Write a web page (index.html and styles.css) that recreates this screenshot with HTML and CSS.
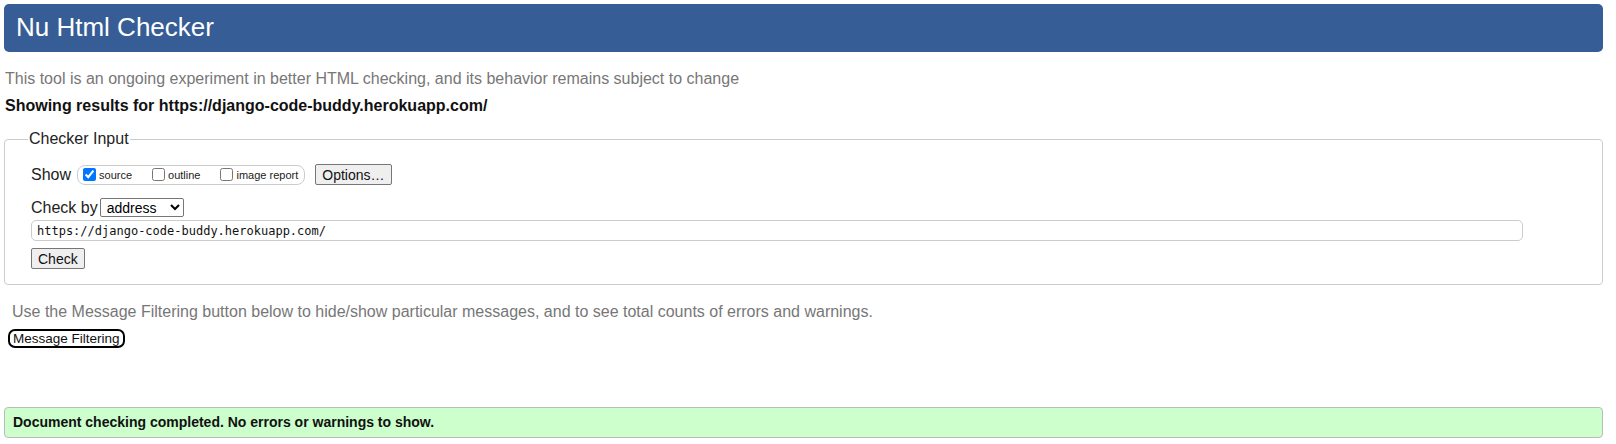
FILE: index.html
```html
<!DOCTYPE html>
<html lang="en">
<head>
    <meta charset="UTF-8" />
    <title>Nu Html Checker</title>
    <link rel="stylesheet" href="styles.css">
</head>
<body>
    <h1 class="title">Nu Html Checker</h1>
    <p class="intro">This tool is an ongoing experiment in better HTML checking, and its behavior remains subject to change</p>
    <p class="results-for">Showing results for https://django-code-buddy.herokuapp.com/</p>
    <form class="checker">
        <fieldset>
            <legend>Checker Input</legend>
            <div class="row show-row">
                <span class="row-label">Show</span>
                <span class="show-group">
                    <label><input type="checkbox" checked /> source</label>
                    <label><input type="checkbox" /> outline</label>
                    <label><input type="checkbox" /> image report</label>
                </span>
                <button type="button" class="btn options">Options…</button>
            </div>
            <div class="row">
                <span class="row-label">Check by</span>
                <select class="check-by">
                    <option>address</option>
                </select>
            </div>
            <input type="url" class="url" value="https://django-code-buddy.herokuapp.com/" />
            <button type="button" class="btn check">Check</button>
        </fieldset>
    </form>
    <p class="filter-note">Use the Message Filtering button below to hide/show particular messages, and to see total counts of errors and warnings.</p>
    <button type="button" class="filter-btn">Message Filtering</button>
    <p class="success">Document checking completed. No errors or warnings to show.</p>
</body>
</html>
```

FILE: styles.css
```css
body {
    font-family: "Liberation Sans", Arial, sans-serif;
    margin: 0;
    padding: 4px 13px 0 4px;
    background-color: white;
    color: #222;
}
.title {
    margin: 0;
    height: 48px;
    line-height: 46px;
    padding-left: 12px;
    background-color: #365d95;
    color: white;
    font-size: 26px;
    font-weight: normal;
    border-radius: 5px;
}
.intro {
    margin: 18px 0 0 1px;
    color: #777;
    font-size: 16px;
}
.results-for {
    margin: 9px 0 0 1px;
    font-size: 16px;
    font-weight: bold;
    color: #111;
}
.checker {
    margin-top: 15px;
}
fieldset {
    margin: 0;
    padding: 6px 26px 15px 26px;
    border: 1px solid #ccc;
    border-radius: 4px;
}
legend {
    padding: 0 1px;
    margin-left: -3px;
    font-size: 16px;
    color: #222;
}
.row {
    display: flex;
    align-items: center;
    margin-top: 2px;
    margin-bottom: 6px;
}
.show-row {
    margin-top: 10px;
    margin-bottom: 13px;
}
.row-label {
    font-size: 16px;
    margin-right: 2px;
}
.show-group {
    display: inline-flex;
    align-items: center;
    gap: 8px;
    height: 18px;
    padding: 0 6px 0 3px;
    margin-left: 4px;
    border: 1px solid #ccc;
    border-radius: 8px;
    font-size: 11px;
}
.show-group label {
    display: inline-flex;
    align-items: center;
    margin-right: 10px;
}
.show-group label:last-child {
    margin-right: 0;
}
.show-group input {
    margin: 0 3px 0 2px;
    width: 13px;
    height: 13px;
}
.btn {
    font-family: "Liberation Sans", Arial, sans-serif;
    font-size: 14px;
    padding: 1px 6px;
    background-color: #efefef;
    border: 1px solid #767676;
    border-radius: 2px;
    color: #111;
}
.options {
    margin-left: 10px;
    height: 21px;
    padding: 0 6px;
}
.check-by {
    font-family: "Liberation Sans", Arial, sans-serif;
    font-size: 14px;
    width: 84px;
    height: 19px;
    padding: 0 2px;
    border: 1px solid #767676;
    border-radius: 2px;
    background: white;
}
.url {
    display: block;
    box-sizing: border-box;
    width: 100%;
    max-width: 1492px;
    height: 21px;
    margin: -3px 0 7px 0;
    padding: 0 5px;
    border: 1px solid #ccc;
    border-radius: 5px;
    font-family: "DejaVu Sans Mono", "Liberation Mono", monospace;
    font-size: 12px;
    color: #111;
}
.check {
    height: 21px;
    padding: 0 6px;
}
.filter-note {
    margin: 18px 0 0 8px;
    font-size: 16px;
    color: #777;
}
.filter-btn {
    display: block;
    margin: 8px 0 0 4px;
    height: 19px;
    padding: 0 3px;
    font-family: "Liberation Sans", Arial, sans-serif;
    font-size: 13.5px;
    background: white;
    border: 2px solid black;
    border-radius: 7px;
    color: #111;
}
.success {
    margin: 59px 0 0 0;
    height: 29px;
    line-height: 29px;
    padding-left: 8px;
    background-color: #ccffcc;
    border: 1px solid #bbb;
    border-radius: 4px;
    font-size: 14px;
    font-weight: bold;
    color: #111;
}
```
